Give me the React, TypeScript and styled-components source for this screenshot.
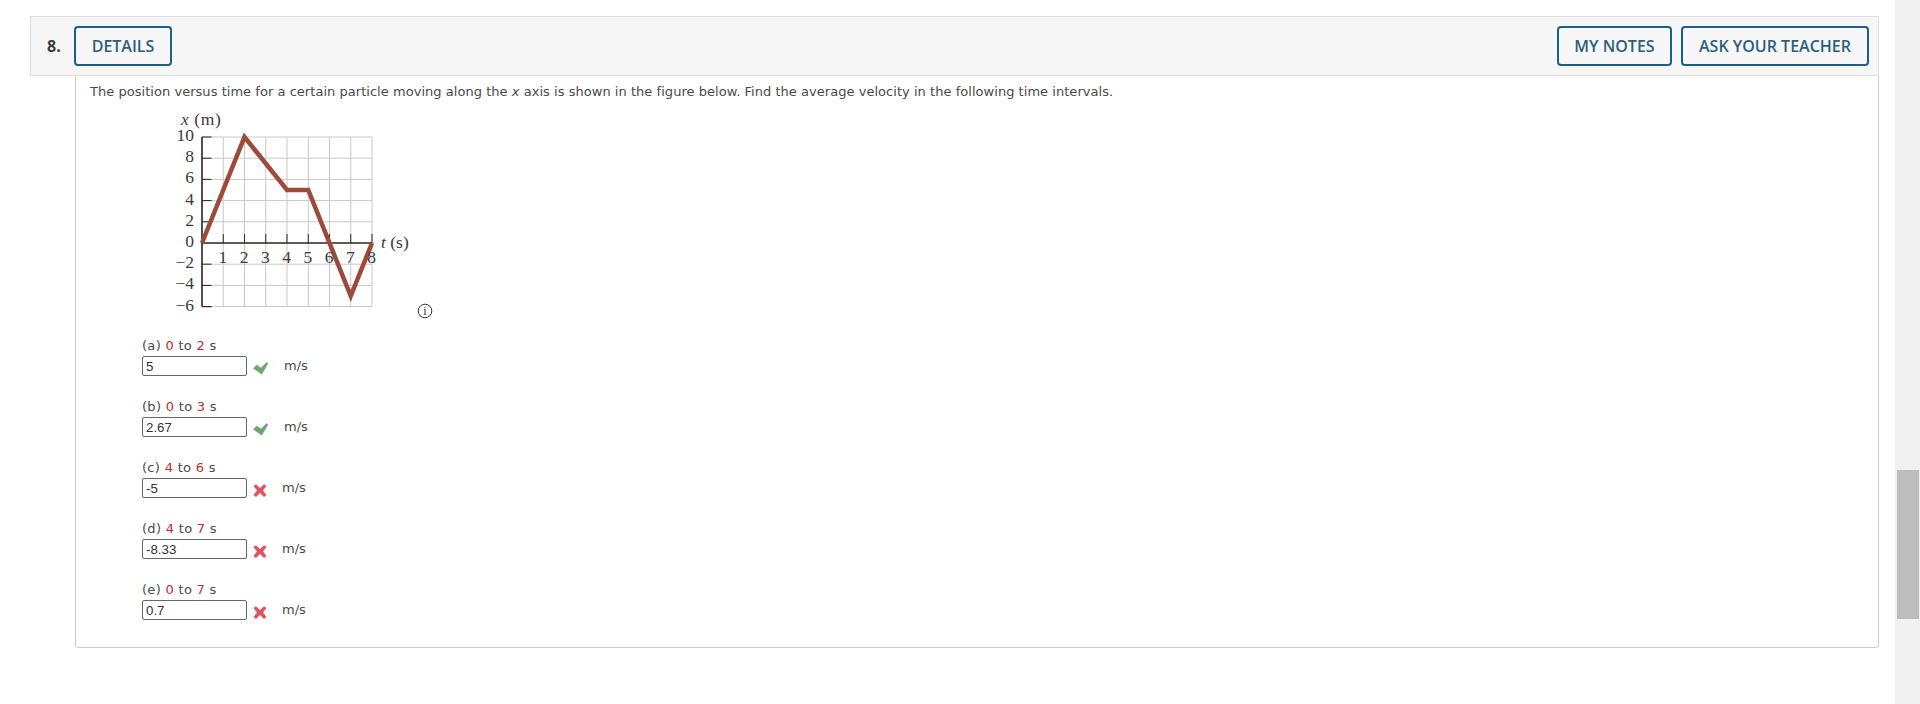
import React from 'react';
import styled, { createGlobalStyle } from 'styled-components';

const GlobalStyle = createGlobalStyle`
    html, body {
        margin : 0;
        padding : 0;
        background : #fff;
        overflow : hidden;
    }
`;

const Page = styled.div`
    width : 1920px;
    height : 704px;
    display : flex;
`;

const Main = styled.div`
    flex : 1;
    box-sizing: border-box;
    padding : 16px 16px 0 30px;
`;

const Track = styled.div`
    width : 25px;
    height : 100%;
    box-sizing: border-box;
    padding : 470px 1px 0 2px;
    background-color : #f1f1f1;
`;

const Thumb = styled.div`
    height : 149px;
    background-color : #bdbdbd;
`;

const Header = styled.div`
    height : 60px;
    box-sizing: border-box;
    display : flex;
    align-items : center;
    padding : 0 9px 0 16px;
    background-color : #f6f6f6;
    border : 1px solid #ddd;
    font-family : "Open Sans", sans-serif;
`;

const Number = styled.div`
    width : 27px;
    font-size : 16px;
    font-weight : 700;
    color : #3a3a3a;
`;

const Spacer = styled.div`
    flex : 1;
`;

const HeaderButton = styled.button<{ $width: number }>`
    width : ${({ $width }) => `${$width}px`};
    height : 40px;
    box-sizing: border-box;
    margin-left : ${({ $width }) => ($width > 150 ? '9px' : '0')};
    padding : 0;
    background : #f7f7f7;
    border : 2px solid #17618a;
    border-radius : 4px;
    color : #2a5f80;
    font-family : "Open Sans", sans-serif;
    font-size : 16px;
    font-weight : 600;
`;

const Body = styled.div`
    margin-left : 45px;
    height : 572px;
    box-sizing: border-box;
    padding-top : 8px;
    border : 1px solid #ccc;
    border-top : none;
    border-radius : 0 0 4px 4px;
    font-family : "DejaVu Sans", Verdana, sans-serif;
    font-size : 13px;
    color : #4a4a4a;
`;

const Prompt = styled.div`
    padding-left : 14px;
    line-height : 16px;
    letter-spacing : 0.037px;
`;

const Figure = styled.svg`
    display : block;
    margin : 0 0 0 74px;
`;

const Answers = styled.div`
    margin-top : 8px;
    padding-left : 66px;
    display : flex;
    flex-direction : column;
    gap : 23px;
`;

const Part = styled.div`
    line-height : 16px;
    letter-spacing : 0.3px;
`;

const Red = styled.span`
    color : #b8302f;
`;

const AnswerRow = styled.div`
    display : flex;
    align-items : center;
    height : 20px;
    margin-top : 2px;
    letter-spacing : 0;
`;

const AnswerInput = styled.input`
    width : 105px;
    height : 20px;
    box-sizing: border-box;
    padding : 0 3px;
    border : 1px solid #666;
    border-radius : 2px;
    color : #333;
    background : #fff;
    font-family : "Liberation Sans", Arial, sans-serif;
    font-size : 13.3px;
`;

const Mark = styled.svg`
    margin-left : 6px;
    flex : none;
`;

const Unit = styled.span<{ $correct: boolean }>`
    margin-left : ${({ $correct }) => ($correct ? '16px' : '14px')};
`;

function CheckMark() {
    return (
        <Mark width='15' height='20' viewBox='0 0 15 20'>
            <path d='M0.3 12.3 L3.7 9 L8 12 L13.5 6.5 L15 7.5 L8.7 18.3 Z' fill='#6fa56f' stroke='#8a9a8a' strokeWidth='0.5' />
        </Mark>
    );
}

function CrossMark() {
    return (
        <Mark width='15' height='20' viewBox='0 0 15 20'>
            <path d='M0.5 8 L3 6.2 L7 10 L11 6.2 L13.5 8 L10 12.5 L13.5 17 L11 19 L7 15 L3 19 L0.5 17 L4 12.5 Z' fill='#e2525f' />
        </Mark>
    );
}

const serif = '"Liberation Serif", "DejaVu Serif", serif';
const originX = 52;
const originY = 143;
const unitX = 21.25;
const unitY = 10.6;

// Figure drawing, in the coordinates of the svg box (which starts at x 150, y 100 of the page)
function Graph() {
    const xs = [1, 2, 3, 4, 5, 6, 7, 8];
    const ys = [10, 8, 6, 4, 2, -2, -4, -6];
    const yLabels = [10, 8, 6, 4, 2, 0, -2, -4, -6];
    const points = [[0, 0], [2, 10], [4, 5], [5, 5], [7, -5], [8, 0]]
        .map(([t, x]) => `${originX + t * unitX},${originY - x * unitY}`)
        .join(' ');
    const top = originY - 10 * unitY;
    const bottom = originY + 6 * unitY;
    return (
        <Figure width='300' height='230' viewBox='0 0 300 230'>
            {xs.map(t => (
                <line key={t} x1={originX + t * unitX} x2={originX + t * unitX} y1={top} y2={bottom} stroke='#c8c8c8' strokeWidth='1' />
            ))}
            {ys.map(v => (
                <line key={v} x1={originX} x2={originX + 8 * unitX} y1={originY - v * unitY} y2={originY - v * unitY} stroke='#c8c8c8' strokeWidth='1' />
            ))}
            <line x1={originX} x2={originX} y1={top} y2={bottom} stroke='#2b2320' strokeWidth='1.6' />
            <line x1={originX} x2={originX + 8 * unitX} y1={originY} y2={originY} stroke='#2b2320' strokeWidth='1.6' />
            {ys.map(v => (
                <line key={v} x1={originX} x2={originX + 9.5} y1={originY - v * unitY} y2={originY - v * unitY} stroke='#2b2320' strokeWidth='1' />
            ))}
            <line x1={originX} x2={originX + 9.5} y1={bottom} y2={bottom} stroke='#2b2320' strokeWidth='1' />
            {xs.map(t => (
                <line key={t} x1={originX + t * unitX} x2={originX + t * unitX} y1={originY - 9} y2={originY} stroke='#2b2320' strokeWidth='1' />
            ))}
            <polyline points={points} fill='none' stroke='#9c4a3c' strokeWidth='4.5' strokeLinejoin='miter' />
            <g fontFamily={serif} fontSize='17.5' fill='#3a3a3a'>
                <text x='31' y='25' letterSpacing='0.6'><tspan fontStyle='italic'>x</tspan> (m)</text>
                {yLabels.map(v => (
                    <text key={v} x='44' y={originY - v * unitY + 4} textAnchor='end'>{v < 0 ? `\u2212${-v}` : v}</text>
                ))}
                {xs.map(t => (
                    <text key={t} x={originX + t * unitX - 0.5} y='162.5' textAnchor='middle'>{t}</text>
                ))}
                <text x='231' y='148'><tspan fontStyle='italic'>t</tspan> (s)</text>
            </g>
            <circle cx='275' cy='211' r='6.8' fill='none' stroke='#333' strokeWidth='1' />
            <text x='275' y='215' textAnchor='middle' fontFamily={serif} fontSize='12' fill='#333'>i</text>
        </Figure>
    );
}

const parts = [
    { name: '(a)', from: 0, to: 2, value: '5', correct: true },
    { name: '(b)', from: 0, to: 3, value: '2.67', correct: true },
    { name: '(c)', from: 4, to: 6, value: '-5', correct: false },
    { name: '(d)', from: 4, to: 7, value: '-8.33', correct: false },
    { name: '(e)', from: 0, to: 7, value: '0.7', correct: false },
];

function App() {
    return (
        <Page>
            <GlobalStyle />
            <Main>
                <Header>
                    <Number>8.</Number>
                    <HeaderButton $width={98}>DETAILS</HeaderButton>
                    <Spacer />
                    <HeaderButton $width={115}>MY NOTES</HeaderButton>
                    <HeaderButton $width={188}>ASK YOUR TEACHER</HeaderButton>
                </Header>
                <Body>
                    <Prompt>
                        The position versus time for a certain particle moving along the <i>x</i> axis is shown in the figure below. Find the average velocity in the following time intervals.
                    </Prompt>
                    <Graph />
                    <Answers>
                        {parts.map(part => (
                            <Part key={part.name}>
                                {part.name} <Red>{part.from}</Red> to <Red>{part.to}</Red> s
                                <AnswerRow>
                                    <AnswerInput readOnly value={part.value} />
                                    {part.correct ? <CheckMark /> : <CrossMark />}
                                    <Unit $correct={part.correct}>m/s</Unit>
                                </AnswerRow>
                            </Part>
                        ))}
                    </Answers>
                </Body>
            </Main>
            <Track>
                <Thumb />
            </Track>
        </Page>
    );
}

export default App;
